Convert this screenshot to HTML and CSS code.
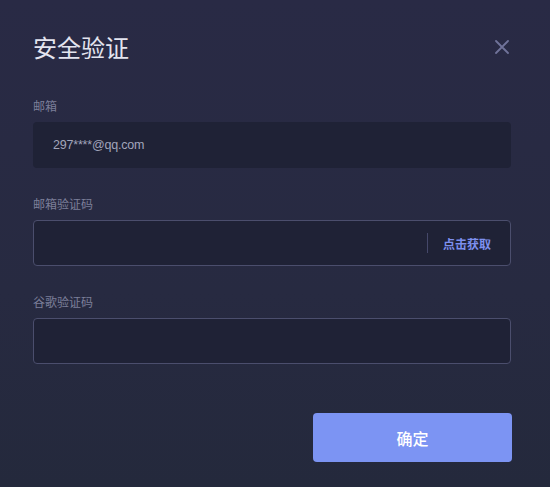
FILE: index.html
```html
<!DOCTYPE html>
<html lang="zh-CN">
<head>
<meta charset="utf-8">
<link rel="stylesheet" href="styles.css">
</head>
<body>
<div class="dialog">
  <div class="header">
    <h1 class="title">安全验证</h1>
    <svg class="close" width="14" height="14" viewBox="0 0 14 14"><path d="M1 1L13 13M13 1L1 13" stroke="#70739a" stroke-width="1.8" stroke-linecap="round"/></svg>
  </div>
  <div class="label first">邮箱</div>
  <div class="field readonly">297****@qq.com</div>
  <div class="label">邮箱验证码</div>
  <div class="field bordered">
    <span class="spacer"></span>
    <span class="divider"></span>
    <span class="link">点击获取</span>
  </div>
  <div class="label">谷歌验证码</div>
  <div class="field bordered"></div>
  <div class="actions">
    <button class="btn">确定</button>
  </div>
</div>
</body>
</html>
```
FILE: styles.css
```css
* { box-sizing: border-box; }
html, body { margin: 0; height: 100%; }
body {
  background: linear-gradient(180deg, #292a45 0%, #272a41 60%, #24293c 100%);
  font-family: "Noto Sans CJK SC", "Noto Sans", sans-serif;
  width: 550px;
  height: 487px;
  overflow: hidden;
}
.dialog {
  padding: 31px 39px 0 33px;
  display: flex;
  flex-direction: column;
}
.header {
  display: flex;
  justify-content: space-between;
  align-items: center;
  height: 32px;
}
.title {
  margin: 0;
  font-size: 24px;
  line-height: 32px;
  font-weight: 400;
  color: #e3e4ef;
}
.close { margin-right: 2px; }
.label {
  margin-top: 27px;
  font-size: 12px;
  line-height: 18px;
  color: #7c7f99;
  margin-bottom: 7px;
}
.label.first { margin-top: 34px; }
.field {
  height: 46px;
  border-radius: 4px;
  background: #1f2236;
  display: flex;
  align-items: center;
}
.readonly {
  padding-left: 20px;
  font-family: "Liberation Sans", "Noto Sans CJK SC", sans-serif;
  font-size: 12.5px;
  letter-spacing: -0.2px;
  color: #a2a5bb;
}
.bordered {
  border: 1px solid #4b4e6d;
  padding-right: 19px;
}
.spacer { flex: 1; }
.divider {
  width: 1px;
  height: 20px;
  background: #45486a;
  margin-right: 15px;
}
.link {
  font-size: 12px;
  font-weight: 700;
  color: #7d90ee;
}
.actions {
  display: flex;
  justify-content: flex-end;
  margin-top: 49px;
}
.btn {
  width: 199px;
  height: 49px;
  border: none;
  border-radius: 4px;
  background: #7c94f3;
  color: #ffffff;
  font-family: "Noto Sans CJK SC", sans-serif;
  font-size: 16px;
  font-weight: 500;
  margin-right: -1px;
}
```
